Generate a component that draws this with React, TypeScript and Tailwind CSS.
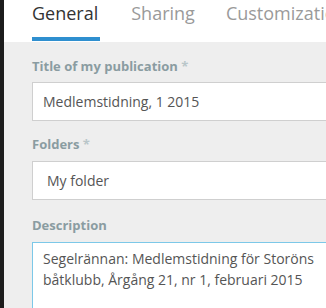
export default function App() {
  const font = { fontFamily: '"Open Sans", "Liberation Sans", sans-serif' };
  return (
    <div className="flex h-[308px] w-[326px] overflow-hidden bg-[#1c1c1c]" style={font}>
      <div className="w-[4px] shrink-0" />
      <div className="flex w-[400px] shrink-0 flex-col bg-[#eeeeee]">
        <div className="flex h-[42px] shrink-0 items-start gap-[31px] bg-white pl-[28px]">
          <div className="flex flex-col">
            <div className="h-[37px] pr-[2px] pt-[1px] text-[18px] leading-[24px] text-[#333]">General</div>
            <div className="h-[4px] bg-[#2f8fcf]" />
          </div>
          <div className="pt-[1px] text-[18px] leading-[24px] text-[#9a9a9a]">Sharing</div>
          <div className="pt-[1px] text-[18px] leading-[24px] text-[#9a9a9a]">Customization</div>
        </div>
        <div className="flex flex-col pl-[28px] pt-[16px]">
          <div className="text-[13px] font-bold leading-[16px] text-[#8a9ca1]">
            Title of my publication <span className="text-[#b9c6c9]">*</span>
          </div>
          <div className="mt-[8px] flex h-[39px] items-center border border-[#cfcfcf] bg-white pl-[10px] text-[14px] text-[#555]">
            Medlemstidning, 1 2015
          </div>
          <div className="mt-[15px] text-[13px] font-bold leading-[16px] text-[#8a9ca1]">
            Folders <span className="text-[#b9c6c9]">*</span>
          </div>
          <div className="mt-[9px] flex h-[39px] items-center border border-[#cfcfcf] bg-white pl-[14px] text-[14px] text-[#555]">
            My folder
          </div>
          <div className="mt-[17px] text-[13px] font-bold leading-[16px] text-[#8a9ca1]">Description</div>
          <div className="mt-[9px] h-[80px] border border-[#7cc8e8] bg-white pl-[10px] pt-[5px] text-[14px] leading-[21px] text-[#555]">
            Segelrännan: Medlemstidning för Storöns
            <br />
            båtklubb, Årgång 21, nr 1, februari 2015
          </div>
        </div>
      </div>
    </div>
  );
}
